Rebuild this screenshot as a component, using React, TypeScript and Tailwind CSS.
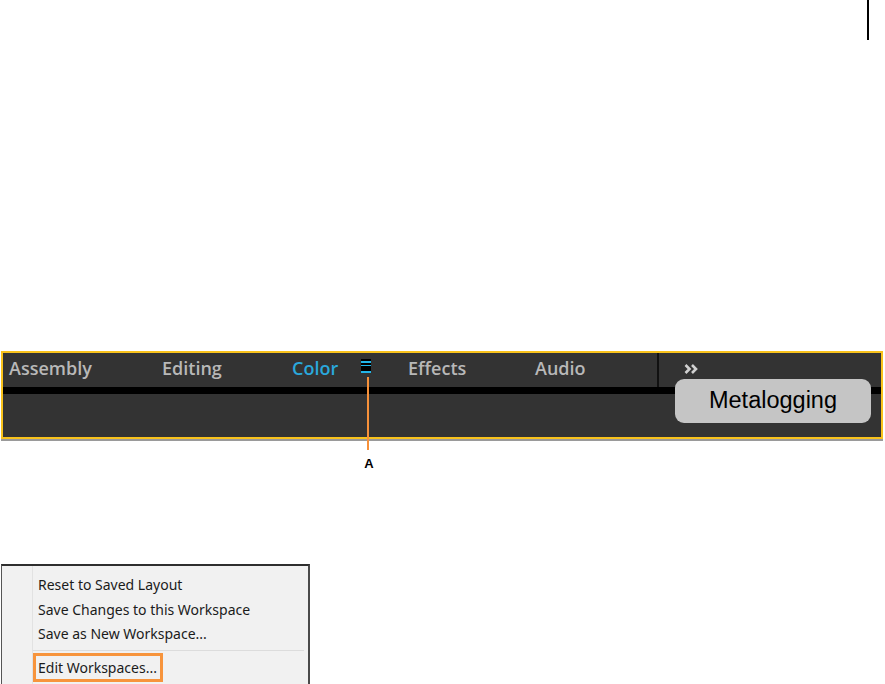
import React from 'react';

const tabs = [
  { label: 'Assembly', width: 'w-[153px]' },
  { label: 'Editing', width: 'w-[130px]' },
];

function MenuIcon() {
  return (
    <div className="flex flex-col w-[10px] h-[14px] bg-black pt-[2px] gap-[2px]">
      <div className="h-[2px] bg-[#22b5e8]" />
      <div className="h-[2px] bg-[#22b5e8]" />
      <div className="h-[2px] bg-[#22b5e8] mt-[3px]" />
    </div>
  );
}

function WorkspaceBar() {
  return (
    <div className="relative ml-[1px] w-[882px] h-[88px] border-2 border-[#f8c21c] bg-[#333333] shadow-[0_2px_0_#9a9a9a] flex flex-col">
      {/* tabs */}
      <div className="flex items-center h-[34px] shrink-0 pl-[6px] pb-[3px] font-['Open_Sans',sans-serif] font-semibold text-[18px] text-[#b8b8b8]">
        {tabs.map((t) => (
          <div key={t.label} className={t.width}>
            {t.label}
          </div>
        ))}
        <div className="w-[69px] text-[#2aa8dc]">Color</div>
        <div className="w-[47px] flex self-start mt-[6px]">
          <MenuIcon />
        </div>
        <div className="w-[127px]">Effects</div>
        <div className="w-[122px]">Audio</div>
        <div className="self-stretch -mb-[3px] w-[2px] bg-[#111]" />
        <div className="pl-[25px] flex">
          <svg width="15" height="10" viewBox="0 0 15 10" fill="none" stroke="#d0d0d0" strokeWidth="2.6">
            <path d="M1.5 1l4 4-4 4M8 1l4 4-4 4" />
          </svg>
        </div>
      </div>
      <div className="h-[7px] shrink-0 bg-black" />
      <div className="flex-1" />

      {/* hover tooltip */}
      <div className="absolute left-[672px] top-[26px] w-[196px] h-[44px] rounded-[9px] bg-[#c5c5c5] flex items-center justify-center font-['Liberation_Sans',Arial,sans-serif] text-[23.5px] text-black">
        Metalogging
      </div>

      {/* callout line */}
      <div className="absolute left-[364px] top-[24px] w-[2px] h-[73px] bg-[#f7913a]" />
    </div>
  );
}

function ContextMenu() {
  const items = ['Reset to Saved Layout', 'Save Changes to this Workspace', 'Save as New Workspace...'];
  return (
    <div className="ml-[1px] w-[309px] h-[125px] bg-[#f1f1f1] border-t-2 border-l border-r-2 border-t-[#2e2e2e] border-l-[#555] border-r-[#4a4a4a] flex font-['Noto_Sans',sans-serif] text-[14px] text-[#1b1b1b]">
      <div className="w-[31px] border-r border-[#e2e2e2]" />
      <div className="flex-1 flex flex-col pt-[7px]">
        {items.map((it) => (
          <div key={it} className="h-[24.5px] flex items-center pl-[5px] leading-none">
            {it}
          </div>
        ))}
        <div className="mt-[3px] h-[1px] bg-[#dcdcdc] mr-[4px]" />
        <div className="mt-[2px] w-[130px] h-[29px] border-[3px] border-[#f7943c] flex items-center pl-[2px] pt-[1px] leading-none">
          Edit Workspaces...
        </div>
      </div>
    </div>
  );
}

export default function App() {
  return (
    <div className="w-[885px] h-[684px] bg-white overflow-hidden">
      <div className="ml-[867px] w-[2px] h-[40px] bg-black" />
      <div className="pt-[311px]">
        <WorkspaceBar />
      </div>
      <div className="pt-[18px] ml-[363px] w-[12px] text-center font-['Liberation_Sans',Arial,sans-serif] font-bold text-[13px] leading-none text-black">
        A
      </div>
      <div className="pt-[94px]">
        <ContextMenu />
      </div>
    </div>
  );
}
